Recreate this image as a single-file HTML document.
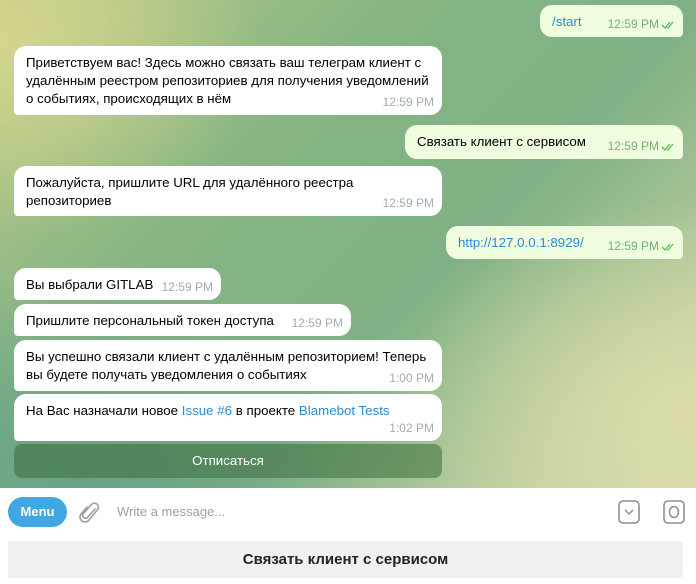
<!DOCTYPE html>
<html><head><meta charset="utf-8"><style>
*{margin:0;padding:0;box-sizing:border-box}
body{width:696px;height:584px;overflow:hidden;position:relative;font-family:"Liberation Sans","Noto Sans CJK SC",sans-serif;font-size:13.3px;color:#000;background:#fff}
.bg{position:absolute;left:0;top:0;width:696px;height:488px;
background:
radial-gradient(ellipse 260px 200px at 0px 40px,rgba(214,214,140,.95),rgba(214,214,140,0)),
radial-gradient(ellipse 300px 220px at 690px 420px,rgba(220,220,170,1),rgba(220,220,170,0)),
radial-gradient(ellipse 300px 200px at 80px 470px,rgba(100,160,135,.9),rgba(100,160,135,0)),
linear-gradient(135deg,#b7c98a 0%,#86b583 35%,#7fb184 60%,#b9cc9e 85%,#d6d8ad 100%);}
.b{position:absolute;background:#fff;border-radius:12px;padding:8px 8px 8px 12px;line-height:18px;white-space:nowrap}
.in{border-bottom-left-radius:4px}
.out{background:#effdde;border-bottom-right-radius:4px}
.t{position:absolute;right:8px;bottom:4px;font-size:12px;color:#a0acb6}
.out .t{color:#6fb36f;right:24px}
.ck{position:absolute;right:8px;bottom:8px}
a{color:#2a8bd2;text-decoration:none}
.btn{position:absolute;left:14px;top:444px;width:428px;height:34px;border-radius:8px;background:rgba(60,110,60,.55);color:#fff;text-align:center;line-height:34px;font-size:13.3px}
.bar{position:absolute;left:0;top:488px;width:696px;height:96px;background:#fff}
.menu{position:absolute;left:8px;top:497px;width:59px;height:30px;border-radius:15px;background:#40a7e3;color:#fff;text-align:center;line-height:30px;font-size:13px;font-weight:bold}
.ph{position:absolute;left:117px;top:504px;color:#9aa2a8;font-size:13px}
.kb{position:absolute;left:8px;top:541px;width:675px;height:37px;background:#f0f0f0;border-radius:3px;text-align:center;line-height:37px;font-size:15px;font-weight:bold;color:#222}
</style></head><body>
<div class="bg"></div>
<div class="b out" style="left:540px;top:5px;width:143px;height:32px"><a>/start</a><span class="t">12:59 PM</span><svg class="ck" width="14" height="8" viewBox="0 0 14 8"><path d="M1 4l3 3 5-6M6 6.5l1 .5 5-6" fill="none" stroke="#5cb85c" stroke-width="1.3"/></svg></div>
<div class="b in" style="left:14px;top:46px;width:428px;height:69px">Приветствуем вас! Здесь можно связать ваш телеграм клиент с<br>удалённым реестром репозиториев для получения уведомлений<br>о событиях, происходящих в нём<span class="t">12:59 PM</span></div>
<div class="b out" style="left:405px;top:125px;width:278px;height:34px">Связать клиент с сервисом<span class="t">12:59 PM</span><svg class="ck" width="14" height="8" viewBox="0 0 14 8"><path d="M1 4l3 3 5-6M6 6.5l1 .5 5-6" fill="none" stroke="#5cb85c" stroke-width="1.3"/></svg></div>
<div class="b in" style="left:14px;top:166px;width:428px;height:50px">Пожалуйста, пришлите URL для удалённого реестра<br>репозиториев<span class="t">12:59 PM</span></div>
<div class="b out" style="left:446px;top:226px;width:237px;height:33px"><a>http://127.0.0.1:8929/</a><span class="t">12:59 PM</span><svg class="ck" width="14" height="8" viewBox="0 0 14 8"><path d="M1 4l3 3 5-6M6 6.5l1 .5 5-6" fill="none" stroke="#5cb85c" stroke-width="1.3"/></svg></div>
<div class="b in" style="left:14px;top:268px;width:207px;height:32px">Вы выбрали GITLAB<span class="t">12:59 PM</span></div>
<div class="b in" style="left:14px;top:304px;width:337px;height:32px">Пришлите персональный токен доступа<span class="t">12:59 PM</span></div>
<div class="b in" style="left:14px;top:340px;width:428px;height:51px">Вы успешно связали клиент с удалённым репозиторием! Теперь<br>вы будете получать уведомления о событиях<span class="t">1:00 PM</span></div>
<div class="b in" style="left:14px;top:394px;width:428px;height:47px">На Вас назначали новое <a>Issue #6</a> в проекте <a>Blamebot Tests</a><span class="t">1:02 PM</span></div>
<div class="btn">Отписаться</div>
<div class="bar"></div>
<div class="menu">Menu</div>
<svg style="position:absolute;left:78px;top:500px" width="24" height="26" viewBox="0 0 24 26"><path d="M17 9 L9 18 a3 3 0 0 1 -4 -4 L14 4 a4 4 0 0 1 6 5 L11 20 a5 5 0 0 1 -8 -6 L9 7" fill="none" stroke="#9aa0a6" stroke-width="1.6" stroke-linecap="round"/></svg>
<div class="ph">Write a message...</div>
<svg style="position:absolute;left:618px;top:500px" width="22" height="24" viewBox="0 0 22 24"><rect x="1" y="1" width="20" height="22" rx="4" fill="none" stroke="#8a9096" stroke-width="1.6"/><path d="M7 10 l4 4 l4 -4" fill="none" stroke="#8a9096" stroke-width="1.5"/></svg>
<svg style="position:absolute;left:663px;top:500px" width="22" height="24" viewBox="0 0 22 24"><rect x="1" y="1" width="20" height="22" rx="4" fill="none" stroke="#8a9096" stroke-width="1.6"/><ellipse cx="11" cy="12" rx="4.5" ry="5.5" fill="none" stroke="#8a9096" stroke-width="1.5"/></svg>
<div class="kb">Связать клиент с сервисом</div>
</body></html>
